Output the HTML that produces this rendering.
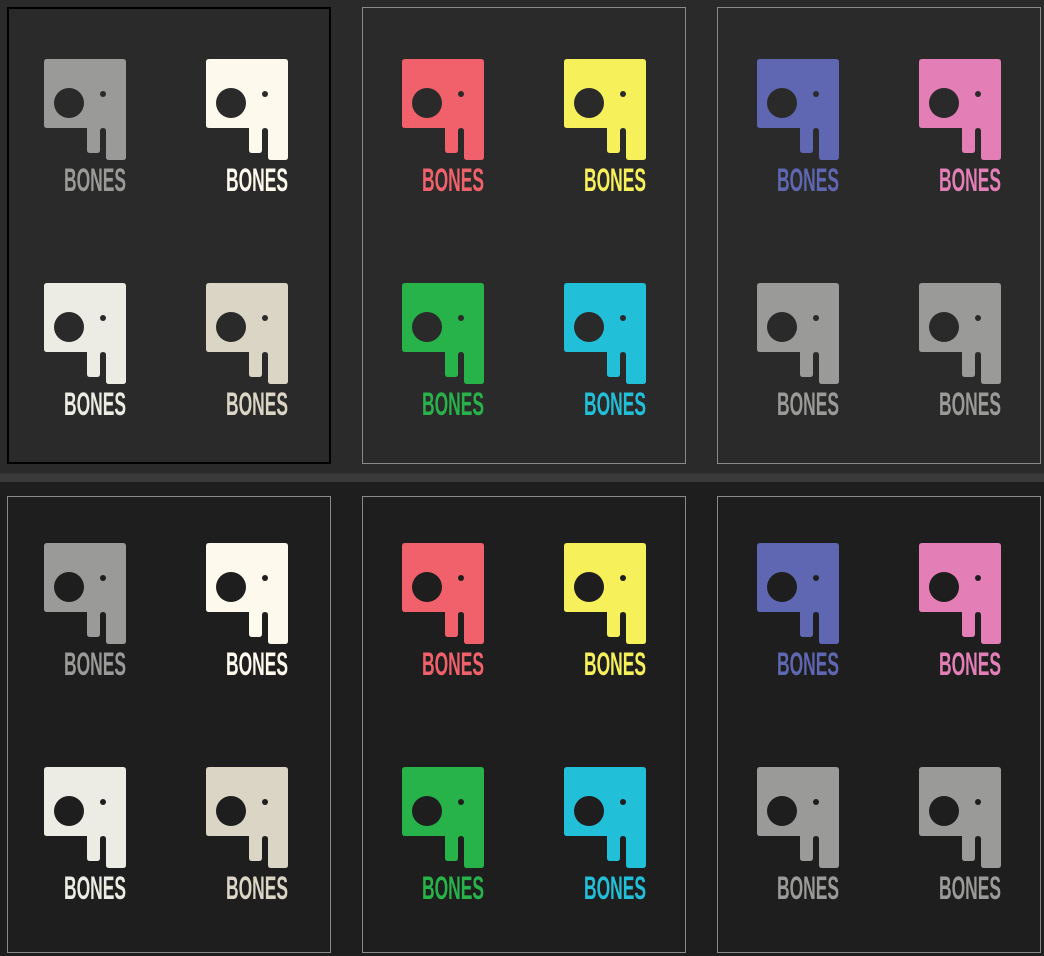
<!DOCTYPE html>
<html><head><meta charset="utf-8"><style>
body{margin:0;width:1044px;height:956px;background:#2a2a2a;position:relative;overflow:hidden;font-family:"Liberation Sans Narrow","Liberation Sans",sans-serif}
.bot{position:absolute;left:0;top:482px;width:1044px;height:474px;background:#1e1e1e}
.sep{position:absolute;left:0;top:473px;width:1044px;height:9px;background:#3a3a3a;border-top:1px solid #333}
.p{position:absolute;width:324px;height:457px;border:1px solid #8a8a8a;box-sizing:border-box}
.sel{border:2px solid #000}
svg.l{position:absolute;width:90px;height:140px;overflow:visible}
text{font-weight:bold;font-size:32px;font-family:"Liberation Sans Narrow","Liberation Sans",sans-serif}
</style></head><body>
<svg width="0" height="0" style="position:absolute"><defs>
<path id="s" d="M3,0H79Q82,0 82,3V98Q82,101 79,101H65Q62,101 62,98V72Q62,69 59,69Q56,69 56,72V91Q56,94 53,94H46Q43,94 43,91V69H3Q0,69 0,66V3Q0,0 3,0Z"/>
</defs></svg>
<div class="sep"></div><div class="bot"></div>
<div class="p sel" style="left:7px;top:7px"></div>
<div class="p" style="left:362px;top:7px"></div>
<div class="p" style="left:717px;top:7px"></div>
<div class="p" style="left:7px;top:496px"></div>
<div class="p" style="left:362px;top:496px"></div>
<div class="p" style="left:717px;top:496px"></div>

<!-- top row -->
<svg class="l" style="left:44px;top:59px"><use href="#s" fill="#9a9a98"/><circle cx="25" cy="44" r="15" fill="#2a2a2a"/><circle cx="59" cy="35" r="3" fill="#2a2a2a"/><text x="82" y="132" text-anchor="end" fill="#9a9a98" textLength="62" lengthAdjust="spacingAndGlyphs">BONES</text></svg>
<svg class="l" style="left:206px;top:59px"><use href="#s" fill="#fdf9ec"/><circle cx="25" cy="44" r="15" fill="#2a2a2a"/><circle cx="59" cy="35" r="3" fill="#2a2a2a"/><text x="82" y="132" text-anchor="end" fill="#fdf9ec" textLength="62" lengthAdjust="spacingAndGlyphs">BONES</text></svg>
<svg class="l" style="left:44px;top:283px"><use href="#s" fill="#ecece4"/><circle cx="25" cy="44" r="15" fill="#2a2a2a"/><circle cx="59" cy="35" r="3" fill="#2a2a2a"/><text x="82" y="132" text-anchor="end" fill="#ecece4" textLength="62" lengthAdjust="spacingAndGlyphs">BONES</text></svg>
<svg class="l" style="left:206px;top:283px"><use href="#s" fill="#dad5c5"/><circle cx="25" cy="44" r="15" fill="#2a2a2a"/><circle cx="59" cy="35" r="3" fill="#2a2a2a"/><text x="82" y="132" text-anchor="end" fill="#dad5c5" textLength="62" lengthAdjust="spacingAndGlyphs">BONES</text></svg>

<svg class="l" style="left:402px;top:59px"><use href="#s" fill="#f0616b"/><circle cx="25" cy="44" r="15" fill="#2a2a2a"/><circle cx="59" cy="35" r="3" fill="#2a2a2a"/><text x="82" y="132" text-anchor="end" fill="#f0616b" textLength="62" lengthAdjust="spacingAndGlyphs">BONES</text></svg>
<svg class="l" style="left:564px;top:59px"><use href="#s" fill="#f6f05a"/><circle cx="25" cy="44" r="15" fill="#2a2a2a"/><circle cx="59" cy="35" r="3" fill="#2a2a2a"/><text x="82" y="132" text-anchor="end" fill="#f6f05a" textLength="62" lengthAdjust="spacingAndGlyphs">BONES</text></svg>
<svg class="l" style="left:402px;top:283px"><use href="#s" fill="#27b24a"/><circle cx="25" cy="44" r="15" fill="#2a2a2a"/><circle cx="59" cy="35" r="3" fill="#2a2a2a"/><text x="82" y="132" text-anchor="end" fill="#27b24a" textLength="62" lengthAdjust="spacingAndGlyphs">BONES</text></svg>
<svg class="l" style="left:564px;top:283px"><use href="#s" fill="#22bfd8"/><circle cx="25" cy="44" r="15" fill="#2a2a2a"/><circle cx="59" cy="35" r="3" fill="#2a2a2a"/><text x="82" y="132" text-anchor="end" fill="#22bfd8" textLength="62" lengthAdjust="spacingAndGlyphs">BONES</text></svg>

<svg class="l" style="left:757px;top:59px"><use href="#s" fill="#5f67b2"/><circle cx="25" cy="44" r="15" fill="#2a2a2a"/><circle cx="59" cy="35" r="3" fill="#2a2a2a"/><text x="82" y="132" text-anchor="end" fill="#5f67b2" textLength="62" lengthAdjust="spacingAndGlyphs">BONES</text></svg>
<svg class="l" style="left:919px;top:59px"><use href="#s" fill="#e47eb6"/><circle cx="25" cy="44" r="15" fill="#2a2a2a"/><circle cx="59" cy="35" r="3" fill="#2a2a2a"/><text x="82" y="132" text-anchor="end" fill="#e47eb6" textLength="62" lengthAdjust="spacingAndGlyphs">BONES</text></svg>
<svg class="l" style="left:757px;top:283px"><use href="#s" fill="#9a9a98"/><circle cx="25" cy="44" r="15" fill="#2a2a2a"/><circle cx="59" cy="35" r="3" fill="#2a2a2a"/><text x="82" y="132" text-anchor="end" fill="#9a9a98" textLength="62" lengthAdjust="spacingAndGlyphs">BONES</text></svg>
<svg class="l" style="left:919px;top:283px"><use href="#s" fill="#9a9a98"/><circle cx="25" cy="44" r="15" fill="#2a2a2a"/><circle cx="59" cy="35" r="3" fill="#2a2a2a"/><text x="82" y="132" text-anchor="end" fill="#9a9a98" textLength="62" lengthAdjust="spacingAndGlyphs">BONES</text></svg>

<!-- bottom row -->
<svg class="l" style="left:44px;top:543px"><use href="#s" fill="#9a9a98"/><circle cx="25" cy="44" r="15" fill="#1e1e1e"/><circle cx="59" cy="35" r="3" fill="#1e1e1e"/><text x="82" y="132" text-anchor="end" fill="#9a9a98" textLength="62" lengthAdjust="spacingAndGlyphs">BONES</text></svg>
<svg class="l" style="left:206px;top:543px"><use href="#s" fill="#fdf9ec"/><circle cx="25" cy="44" r="15" fill="#1e1e1e"/><circle cx="59" cy="35" r="3" fill="#1e1e1e"/><text x="82" y="132" text-anchor="end" fill="#fdf9ec" textLength="62" lengthAdjust="spacingAndGlyphs">BONES</text></svg>
<svg class="l" style="left:44px;top:767px"><use href="#s" fill="#ecece4"/><circle cx="25" cy="44" r="15" fill="#1e1e1e"/><circle cx="59" cy="35" r="3" fill="#1e1e1e"/><text x="82" y="132" text-anchor="end" fill="#ecece4" textLength="62" lengthAdjust="spacingAndGlyphs">BONES</text></svg>
<svg class="l" style="left:206px;top:767px"><use href="#s" fill="#dad5c5"/><circle cx="25" cy="44" r="15" fill="#1e1e1e"/><circle cx="59" cy="35" r="3" fill="#1e1e1e"/><text x="82" y="132" text-anchor="end" fill="#dad5c5" textLength="62" lengthAdjust="spacingAndGlyphs">BONES</text></svg>

<svg class="l" style="left:402px;top:543px"><use href="#s" fill="#f0616b"/><circle cx="25" cy="44" r="15" fill="#1e1e1e"/><circle cx="59" cy="35" r="3" fill="#1e1e1e"/><text x="82" y="132" text-anchor="end" fill="#f0616b" textLength="62" lengthAdjust="spacingAndGlyphs">BONES</text></svg>
<svg class="l" style="left:564px;top:543px"><use href="#s" fill="#f6f05a"/><circle cx="25" cy="44" r="15" fill="#1e1e1e"/><circle cx="59" cy="35" r="3" fill="#1e1e1e"/><text x="82" y="132" text-anchor="end" fill="#f6f05a" textLength="62" lengthAdjust="spacingAndGlyphs">BONES</text></svg>
<svg class="l" style="left:402px;top:767px"><use href="#s" fill="#27b24a"/><circle cx="25" cy="44" r="15" fill="#1e1e1e"/><circle cx="59" cy="35" r="3" fill="#1e1e1e"/><text x="82" y="132" text-anchor="end" fill="#27b24a" textLength="62" lengthAdjust="spacingAndGlyphs">BONES</text></svg>
<svg class="l" style="left:564px;top:767px"><use href="#s" fill="#22bfd8"/><circle cx="25" cy="44" r="15" fill="#1e1e1e"/><circle cx="59" cy="35" r="3" fill="#1e1e1e"/><text x="82" y="132" text-anchor="end" fill="#22bfd8" textLength="62" lengthAdjust="spacingAndGlyphs">BONES</text></svg>

<svg class="l" style="left:757px;top:543px"><use href="#s" fill="#5f67b2"/><circle cx="25" cy="44" r="15" fill="#1e1e1e"/><circle cx="59" cy="35" r="3" fill="#1e1e1e"/><text x="82" y="132" text-anchor="end" fill="#5f67b2" textLength="62" lengthAdjust="spacingAndGlyphs">BONES</text></svg>
<svg class="l" style="left:919px;top:543px"><use href="#s" fill="#e47eb6"/><circle cx="25" cy="44" r="15" fill="#1e1e1e"/><circle cx="59" cy="35" r="3" fill="#1e1e1e"/><text x="82" y="132" text-anchor="end" fill="#e47eb6" textLength="62" lengthAdjust="spacingAndGlyphs">BONES</text></svg>
<svg class="l" style="left:757px;top:767px"><use href="#s" fill="#9a9a98"/><circle cx="25" cy="44" r="15" fill="#1e1e1e"/><circle cx="59" cy="35" r="3" fill="#1e1e1e"/><text x="82" y="132" text-anchor="end" fill="#9a9a98" textLength="62" lengthAdjust="spacingAndGlyphs">BONES</text></svg>
<svg class="l" style="left:919px;top:767px"><use href="#s" fill="#9a9a98"/><circle cx="25" cy="44" r="15" fill="#1e1e1e"/><circle cx="59" cy="35" r="3" fill="#1e1e1e"/><text x="82" y="132" text-anchor="end" fill="#9a9a98" textLength="62" lengthAdjust="spacingAndGlyphs">BONES</text></svg>
</body></html>
